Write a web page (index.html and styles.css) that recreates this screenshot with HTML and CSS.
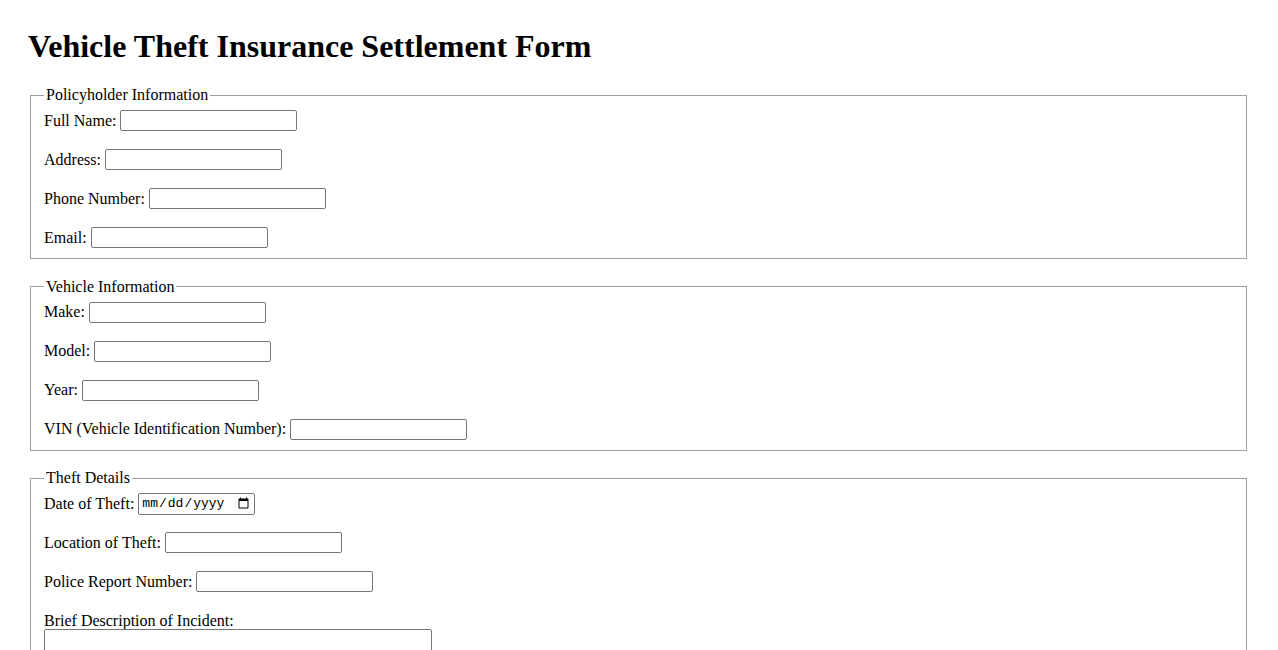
FILE: index.html
```html
<!DOCTYPE html>
<html lang="en">
<head>
<meta charset="utf-8">
<title>Vehicle Theft Insurance Settlement Form</title>
<link rel="stylesheet" href="styles.css">
</head>
<body>
<h1 class="title">Vehicle Theft Insurance Settlement Form</h1>
<form class="form">
  <fieldset class="section">
    <legend class="section-legend">Policyholder Information</legend>
    <div class="field"><label class="field-label" for="name">Full Name:</label><input class="field-input" type="text" id="name"></div>
    <div class="field"><label class="field-label" for="address">Address:</label><input class="field-input" type="text" id="address"></div>
    <div class="field"><label class="field-label" for="phone">Phone Number:</label><input class="field-input" type="tel" id="phone"></div>
    <div class="field"><label class="field-label" for="email">Email:</label><input class="field-input" type="email" id="email"></div>
  </fieldset>
  <fieldset class="section">
    <legend class="section-legend">Vehicle Information</legend>
    <div class="field"><label class="field-label" for="make">Make:</label><input class="field-input" type="text" id="make"></div>
    <div class="field"><label class="field-label" for="model">Model:</label><input class="field-input" type="text" id="model"></div>
    <div class="field"><label class="field-label" for="year">Year:</label><input class="field-input" type="text" id="year"></div>
    <div class="field"><label class="field-label" for="vin">VIN (Vehicle Identification Number):</label><input class="field-input" type="text" id="vin"></div>
  </fieldset>
  <fieldset class="section">
    <legend class="section-legend">Theft Details</legend>
    <div class="field"><label class="field-label" for="date">Date of Theft:</label><input class="field-input field-date" type="date" id="date"></div>
    <div class="field"><label class="field-label" for="location">Location of Theft:</label><input class="field-input" type="text" id="location"></div>
    <div class="field"><label class="field-label" for="report">Police Report Number:</label><input class="field-input" type="text" id="report"></div>
    <div class="field field-stack"><label class="field-label" for="desc">Brief Description of Incident:</label><textarea class="field-textarea" id="desc" rows="4"></textarea></div>
  </fieldset>
</form>
</body>
</html>
```
FILE: styles.css
```css
body {
  margin: 28px 29px 28px 28px;
  font-family: "Liberation Serif", "Times New Roman", serif;
  font-size: 16px;
  color: #000;
  background: #fff;
}
.title {
  font-size: 32px;
  font-weight: bold;
  margin: 0 0 21px;
}
.section {
  margin: 0 2px 18.6px;
  border: 1px solid #a0a0a0;
  padding: 0 13px 9px;
}
.section-legend {
  padding: 0 2px;
}
.field {
  display: flex;
  align-items: center;
  column-gap: 4px;
  height: 23px;
  margin: 5px 0 16px;
}
.field:last-child {
  margin-bottom: 0;
}
.field-input {
  box-sizing: border-box;
  width: 177px;
  height: 21px;
  margin: 0;
  padding: 1px 2px;
  border: 1px solid #767676;
  border-radius: 2px;
  font-family: Arial, "Liberation Sans", sans-serif;
  font-size: 13.33px;
  background: #fff;
}
.field-date {
  width: 117px;
  height: 22px;
  font-family: "Liberation Mono", monospace;
  font-size: 13px;
}
.field-stack {
  flex-direction: column;
  align-items: flex-start;
  height: auto;
  row-gap: 0;
  padding-top: 3px;
}
.field-textarea {
  box-sizing: border-box;
  width: 388px;
  height: 70px;
  margin: -1px 0 0;
  border: 1px solid #767676;
  border-radius: 2px;
  font-family: "Liberation Mono", monospace;
  font-size: 13.33px;
}
```
